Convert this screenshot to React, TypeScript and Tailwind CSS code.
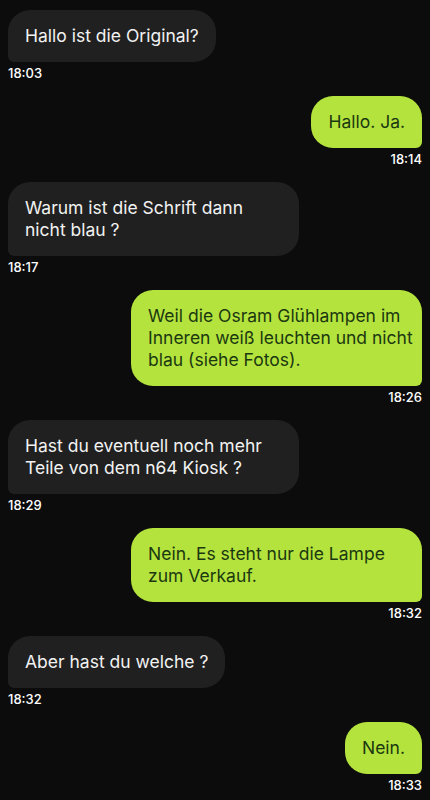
import React from 'react';

type Msg = { out: boolean; lines: string[]; time: string; wide?: boolean };

const messages: Msg[] = [
  { out: false, lines: ['Hallo ist die Original?'], time: '18:03' },
  { out: true, lines: ['Hallo. Ja.'], time: '18:14' },
  { out: false, lines: ['Warum ist die Schrift dann', 'nicht blau ?'], time: '18:17', wide: true },
  {
    out: true,
    lines: ['Weil die Osram Glühlampen im', 'Inneren weiß leuchten und nicht', 'blau (siehe Fotos).'],
    time: '18:26',
    wide: true,
  },
  { out: false, lines: ['Hast du eventuell noch mehr', 'Teile von dem n64 Kiosk ?'], time: '18:29', wide: true },
  { out: true, lines: ['Nein. Es steht nur die Lampe', 'zum Verkauf.'], time: '18:32', wide: true },
  { out: false, lines: ['Aber hast du welche ?'], time: '18:32' },
  { out: true, lines: ['Nein.'], time: '18:33' },
];

const Bubble = ({ msg }: { msg: Msg }) => {
  const base = 'px-[17px] py-[15px] text-[17.5px] leading-[22px] rounded-[22px]';
  const side = msg.out
    ? 'bg-[#b4e33d] text-[#1b3810] rounded-br-[6px]'
    : 'bg-[#202020] text-[#f2f2f2] rounded-bl-[6px]';
  return (
    <div className={`flex flex-col ${msg.out ? 'items-end' : 'items-start'}`}>
      <div className={`${base} ${side} ${msg.wide ? 'w-[291px]' : 'w-fit'}`}>
        {msg.lines.map((l, i) => (
          <div key={i} className="whitespace-nowrap">
            {l}
          </div>
        ))}
      </div>
      <div className="mt-[3px] text-[13px] leading-[16px] font-medium text-white">{msg.time}</div>
    </div>
  );
};

export default function App() {
  return (
    <div
      className="min-h-[800px] w-full bg-[#0c0c0c] px-2 pt-[10px] flex flex-col gap-[15px]"
      style={{ fontFamily: 'Inter, "Noto Sans", sans-serif' }}
    >
      {messages.map((m, i) => (
        <Bubble key={i} msg={m} />
      ))}
    </div>
  );
}
